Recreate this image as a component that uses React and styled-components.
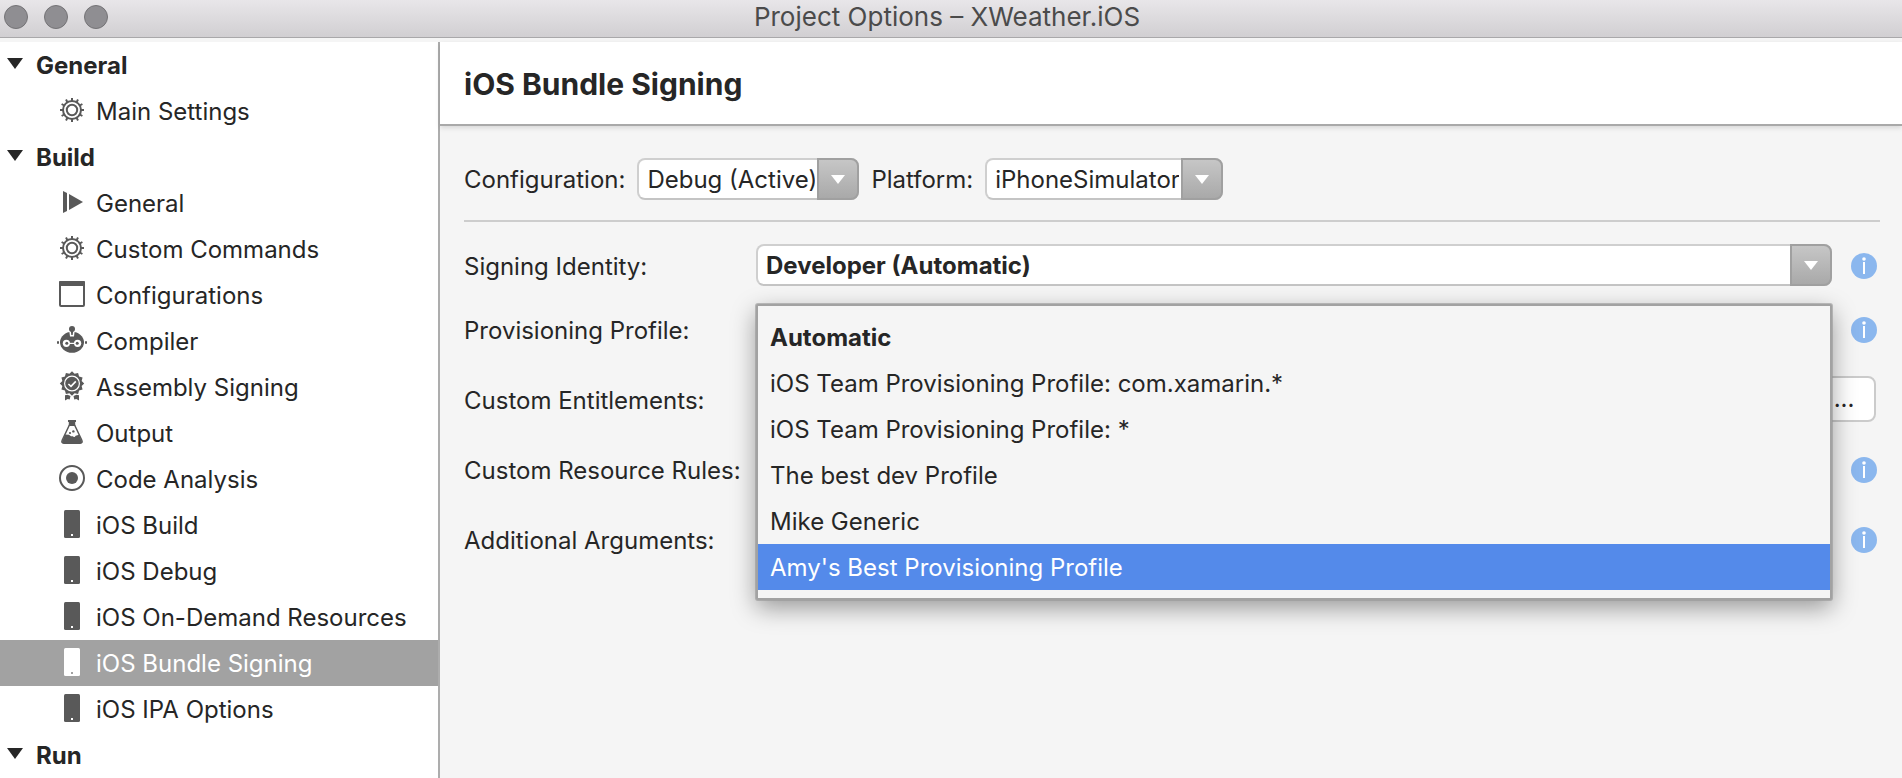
import React from "react";
import styled, { createGlobalStyle } from "styled-components";

const GlobalStyle = createGlobalStyle`
  *, *::before, *::after { box-sizing: border-box; }
  body {
    margin: 0;
    background: #f5f5f5;
    color: #262626;
    font-family: Inter, "Liberation Sans", sans-serif;
    font-size: 24px;
    line-height: 28px;
  }
  button, input, select { font: inherit; color: inherit; }
`;

const Window = styled.div`
  min-height: 100vh;
  display: flex;
  flex-direction: column;
`;

const TitleBar = styled.header`
  height: 38px;
  flex: none;
  display: flex;
  align-items: center;
  padding: 0 8px 4px 4px;
  background: linear-gradient(#e8e6e9, #d1cfd2);
  border-bottom: 1px solid #a9a8aa;
`;

const WindowButtons = styled.div`
  display: flex;
  gap: 16px;
  width: 104px;
`;

const WindowButton = styled.button`
  width: 24px;
  height: 24px;
  padding: 0;
  border: 1px solid #747376;
  border-radius: 50%;
  background: #8f8e92;
`;

const WindowTitle = styled.h1`
  flex: 1;
  margin: 0;
  padding-right: 108px;
  text-align: center;
  font-size: 26px;
  font-weight: 400;
  color: #4b4b4b;
`;

const Body = styled.div`
  flex: 1;
  display: flex;
  padding-top: 4px;
`;

const Sidebar = styled.nav`
  width: 440px;
  flex: none;
  background: #fff;
  border-right: 2px solid #adadad;
`;

const GroupButton = styled.button`
  display: flex;
  align-items: center;
  gap: 12px;
  width: 100%;
  height: 46px;
  padding: 2px 0 0 6px;
  border: 0;
  background: none;
  font-weight: 700;
  text-align: left;
`;

const GroupList = styled.ul`
  list-style: none;
  margin: 0;
  padding: 0;
`;

const PageLink = styled.a`
  display: flex;
  align-items: center;
  gap: 8px;
  height: 46px;
  padding-left: 56px;
  text-decoration: none;
  line-height: 48px;
  white-space: nowrap;
  color: ${(p) => (p.$selected ? "#fff" : "#262626")};
  background: ${(p) => (p.$selected ? "#a2a2a2" : "transparent")};
  --icon: ${(p) => (p.$selected ? "#fff" : "#595959")};
  --hole: ${(p) => (p.$selected ? "#a2a2a2" : "#fff")};
`;

const PageName = styled.span`
  padding-top: 2px;
`;

const IconSvg = styled.svg`
  width: 32px;
  height: 32px;
  flex: none;
  overflow: visible;
`;

const Disclosure = styled.svg`
  width: 18px;
  height: 18px;
  flex: none;
`;

const Content = styled.main`
  flex: 1;
  min-width: 0;
`;

const PageHeader = styled.div`
  height: 84px;
  display: flex;
  align-items: center;
  padding: 2px 0 0 24px;
  background: #fff;
  border-bottom: 2px solid #a9a9a9;
  box-shadow: 0 2px 5px rgba(0, 0, 0, 0.12);
`;

const PageTitle = styled.h2`
  margin: 0;
  font-size: 30px;
  line-height: 34px;
  font-weight: 700;
`;

const Form = styled.form`
  padding: 32px 22px 0 24px;
`;

const Toolbar = styled.div`
  display: flex;
  align-items: center;
  gap: 12px;
  padding-bottom: 20px;
  margin-bottom: 14px;
  border-bottom: 2px solid #cdcdcd;
`;

const ToolbarLabel = styled.label`
  padding-top: 2px;
  white-space: nowrap;
`;

const Row = styled.div`
  display: flex;
  align-items: center;
  height: ${(p) => (p.$first ? 58 : 70)}px;
  padding-right: 3px;
`;

const RowLabel = styled.label`
  width: 292px;
  flex: none;
  padding-top: 3px;
  white-space: nowrap;
`;

const Field = styled.div`
  position: relative;
  flex: 1;
  min-width: 0;
`;

const ComboBox = styled.div`
  position: relative;
  display: flex;
  height: 42px;
  width: ${(p) => p.$width || "100%"};
`;

const ComboSelect = styled.select`
  appearance: none;
  width: 100%;
  height: 42px;
  padding: 2px 42px 0 8px;
  border: 2px solid #cfcfcf;
  border-bottom-color: #c4c4c4;
  border-radius: 8px;
  background: #fff;
  font-weight: ${(p) => (p.$bold ? 700 : 400)};
`;

const ComboArrow = styled.span`
  position: absolute;
  top: 0;
  right: 0;
  width: 42px;
  height: 42px;
  display: flex;
  align-items: center;
  justify-content: center;
  border: 2px solid #a0a0a0;
  border-radius: 0 8px 8px 0;
  background: linear-gradient(#c6c6c6, #a9a9a9);
  pointer-events: none;
`;

const TextInput = styled.input`
  display: block;
  width: 100%;
  height: 42px;
  padding: 0 8px;
  border: 2px solid #cfcfcf;
  background: #fff;
`;

const BrowseButton = styled.button`
  width: 80px;
  height: 46px;
  margin: 0 1px 0 8px;
  padding: 0 0 0 16px;
  border: 2px solid #cbcbcb;
  border-radius: 8px;
  background: #fff;
`;

const InfoButton = styled.button`
  display: block;
  flex: none;
  width: 26px;
  height: 26px;
  margin: 2px 0 0 19px;
  padding: 0;
  border: 0;
  border-radius: 50%;
  background: #8bb7ee;
`;

const Popup = styled.ul`
  position: absolute;
  z-index: 2;
  top: -4px;
  left: 0;
  right: 0;
  margin: 0;
  padding: 8px 0;
  list-style: none;
  background: #f5f5f5;
  border: 2px solid #a2a2a2;
  border-radius: 2px;
  box-shadow: 0 0 0 1px rgba(150, 150, 150, 0.6), 0 8px 24px rgba(0, 0, 0, 0.38);
`;

const PopupOption = styled.li`
  height: 46px;
  padding: 0 12px;
  line-height: 48px;
  white-space: nowrap;
  font-weight: ${(p) => (p.$bold ? 700 : 400)};
  color: ${(p) => (p.$active ? "#fff" : "inherit")};
  background: ${(p) => (p.$active ? "#548aea" : "transparent")};
`;

const I = "var(--icon)";
const H = "var(--hole)";
const spokes = Array.from({ length: 12 }, (_, i) => i * 30);

const star = Array.from({ length: 24 }, (_, i) => {
  const r = i % 2 ? 10 : 12.2;
  const a = (i * Math.PI) / 12;
  return `${16 + r * Math.sin(a)},${12.5 - r * Math.cos(a)}`;
}).join(" ");

const shapes = {
  gear: (
    <g stroke={I} strokeWidth="2" fill="none">
      <circle cx="16" cy="15" r="9" />
      <circle cx="16" cy="15" r="5.2" />
      {spokes.map((a) => (
        <path key={a} d="M16 3v3.5" transform={`rotate(${a} 16 15)`} />
      ))}
    </g>
  ),
  play: (
    <g fill={I}>
      <path d="M7 4l4 2v18l-4 2z" />
      <path d="M13 7l14 8-14 8z" />
    </g>
  ),
  window: (
    <g>
      <rect x="4" y="3" width="24" height="24" rx="1" fill="none" stroke={I} strokeWidth="2" />
      <rect x="3" y="2" width="26" height="5" rx="1" fill={I} />
    </g>
  ),
  robot: (
    <g fill={I}>
      <ellipse cx="16" cy="17.3" rx="12" ry="10.5" />
      <path d="M13.2 5.5h5.6l-.8 6h-4z" fill={H} />
      <circle cx="16" cy="4" r="3" />
      <path d="M14.7 5h2.6l-.6 5h-1.4z" />
      <rect x="1" y="16" width="2" height="3" rx="1" />
      <rect x="29" y="16" width="2" height="3" rx="1" />
      <circle cx="10.4" cy="18.3" r="3.6" fill={H} />
      <circle cx="21.6" cy="18.3" r="3.6" fill={H} />
      <rect x="13" y="17.8" width="6" height="1.2" fill={H} />
      <circle cx="10.8" cy="18.3" r="1.5" />
      <circle cx="21.2" cy="18.3" r="1.5" />
    </g>
  ),
  badge: (
    <g fill={I}>
      <polygon points={star} />
      <circle cx="16" cy="12.5" r="7.4" fill="none" stroke={H} strokeWidth="1.2" />
      <path d="M12.4 13l2.6 2.4 4.8-5" fill="none" stroke={H} strokeWidth="1.6" />
      <path d="M9 24.2l2.5-.4 3 1.2-.8 3.4-2-.4L9 29.6z" />
      <path d="M23 24.2l-2.5-.4-3 1.2.8 3.4 2-.4 2.7 1.6z" />
    </g>
  ),
  flask: (
    <g fill={I}>
      <path d="M12 3h8v2h-.8v4h-6.4V5H12z" />
      <path
        d="M13.4 8L6.2 23.2Q5 26.2 8 26.2h16q3 0 1.8-3L18.6 8"
        fill="none"
        stroke={I}
        strokeWidth="1.5"
      />
      <path d="M9 17.6l4 .2 2 1.4h3l5-1.4L26 25q0 1.6-2 1.6H8Q6 26.6 6 25z" />
      <circle cx="14" cy="16" r="1.1" />
      <circle cx="17.4" cy="14.4" r="1.2" />
      <circle cx="18.2" cy="18.8" r="1.2" fill={H} />
    </g>
  ),
  target: (
    <g>
      <circle cx="16" cy="15" r="12" fill="none" stroke={I} strokeWidth="2" />
      <circle cx="16" cy="15" r="6" fill={I} />
    </g>
  ),
  phone: (
    <g>
      <rect x="8" y="1" width="16" height="28" rx="1.5" fill={I} />
      <rect x="15" y="25" width="2" height="2" fill={H} />
    </g>
  ),
};

const groups = [
  { name: "General", pages: [["gear", "Main Settings"]] },
  {
    name: "Build",
    pages: [
      ["play", "General"],
      ["gear", "Custom Commands"],
      ["window", "Configurations"],
      ["robot", "Compiler"],
      ["badge", "Assembly Signing"],
      ["flask", "Output"],
      ["target", "Code Analysis"],
      ["phone", "iOS Build"],
      ["phone", "iOS Debug"],
      ["phone", "iOS On-Demand Resources"],
      ["phone", "iOS Bundle Signing"],
      ["phone", "iOS IPA Options"],
    ],
  },
  { name: "Run", pages: [] },
];

const profiles = [
  "Automatic",
  "iOS Team Provisioning Profile: com.xamarin.*",
  "iOS Team Provisioning Profile: *",
  "The best dev Profile",
  "Mike Generic",
  "Amy's Best Provisioning Profile",
];

function Combo({ id, value, width, bold }) {
  return (
    <ComboBox $width={width}>
      <ComboSelect id={id} $bold={bold} defaultValue={value}>
        <option>{value}</option>
      </ComboSelect>
      <ComboArrow>
        <svg width="14" height="9" viewBox="0 0 14 9" aria-hidden="true">
          <path d="M0 0h14L7 9z" fill="#fff" />
        </svg>
      </ComboArrow>
    </ComboBox>
  );
}

function Info({ topic }) {
  return (
    <InfoButton type="button" aria-label={`About ${topic}`}>
      <svg width="26" height="26" viewBox="0 0 26 26" aria-hidden="true">
        <circle cx="13" cy="6" r="1.8" fill="#fff" />
        <rect x="12" y="9" width="2" height="12" fill="#fff" />
      </svg>
    </InfoButton>
  );
}

export default function App() {
  return (
    <Window>
      <GlobalStyle />
      <TitleBar>
        <WindowButtons>
          <WindowButton aria-label="Close" />
          <WindowButton aria-label="Minimize" />
          <WindowButton aria-label="Zoom" />
        </WindowButtons>
        <WindowTitle>Project Options – XWeather.iOS</WindowTitle>
      </TitleBar>
      <Body>
        <Sidebar aria-label="Option pages">
          {groups.map((group) => (
            <section key={group.name}>
              <GroupButton aria-expanded="true">
                <Disclosure viewBox="0 0 18 18" aria-hidden="true">
                  <path d="M1 1h16L9 12z" fill="#262626" />
                </Disclosure>
                {group.name}
              </GroupButton>
              <GroupList>
                {group.pages.map(([icon, label]) => {
                  const selected = label === "iOS Bundle Signing";
                  return (
                    <li key={label}>
                      <PageLink href="#" $selected={selected} aria-current={selected ? "page" : undefined}>
                        <IconSvg viewBox="0 0 32 32" aria-hidden="true">
                          {shapes[icon]}
                        </IconSvg>
                        <PageName>{label}</PageName>
                      </PageLink>
                    </li>
                  );
                })}
              </GroupList>
            </section>
          ))}
        </Sidebar>
        <Content>
          <PageHeader>
            <PageTitle>iOS Bundle Signing</PageTitle>
          </PageHeader>
          <Form>
            <Toolbar>
              <ToolbarLabel htmlFor="configuration">Configuration:</ToolbarLabel>
              <Combo id="configuration" value="Debug (Active)" width="222px" />
              <ToolbarLabel htmlFor="platform">Platform:</ToolbarLabel>
              <Combo id="platform" value="iPhoneSimulator" width="238px" />
            </Toolbar>
            <Row $first>
              <RowLabel htmlFor="identity">Signing Identity:</RowLabel>
              <Field>
                <Combo id="identity" value="Developer (Automatic)" bold />
              </Field>
              <Info topic="signing identity" />
            </Row>
            <Row>
              <RowLabel id="profile-label" as="span">
                Provisioning Profile:
              </RowLabel>
              <Field>
                <ComboBox>
                  <Popup role="listbox" aria-labelledby="profile-label">
                    {profiles.map((name, i) => {
                      const active = i === profiles.length - 1;
                      return (
                        <PopupOption key={name} role="option" aria-selected={active} $active={active} $bold={i === 0}>
                          {name}
                        </PopupOption>
                      );
                    })}
                  </Popup>
                </ComboBox>
              </Field>
              <Info topic="provisioning profile" />
            </Row>
            <Row>
              <RowLabel htmlFor="entitlements">Custom Entitlements:</RowLabel>
              <Field>
                <TextInput id="entitlements" />
              </Field>
              <BrowseButton type="button" aria-label="Browse for entitlements">
                ...
              </BrowseButton>
            </Row>
            <Row>
              <RowLabel htmlFor="rules">Custom Resource Rules:</RowLabel>
              <Field>
                <TextInput id="rules" />
              </Field>
              <Info topic="custom resource rules" />
            </Row>
            <Row>
              <RowLabel htmlFor="arguments">Additional Arguments:</RowLabel>
              <Field>
                <TextInput id="arguments" />
              </Field>
              <Info topic="additional arguments" />
            </Row>
          </Form>
        </Content>
      </Body>
    </Window>
  );
}
